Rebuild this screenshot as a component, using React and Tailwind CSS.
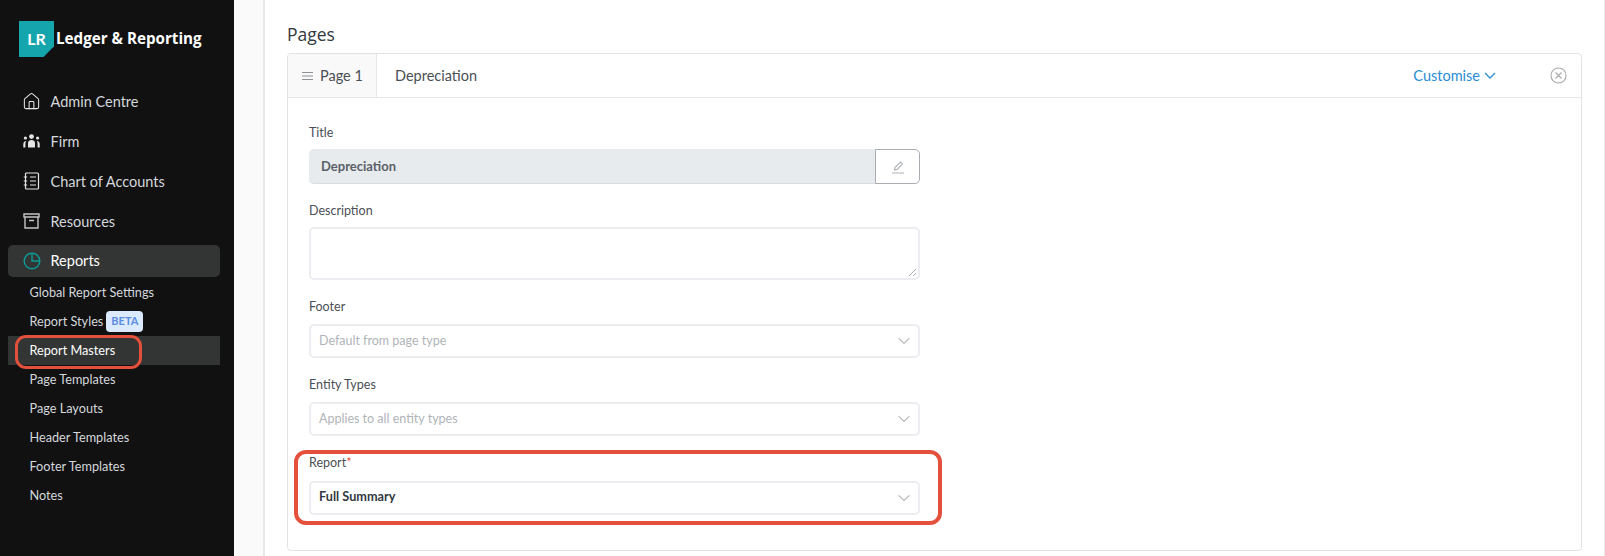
import React from "react";
import { ChevronDown, Home } from "lucide-react";

const Sub = ({ children, active }) => (
  <div className={`h-[29px] flex items-center pl-[21.5px] text-[12.7px] ${active ? "bg-[#333534] text-white" : "text-[#d5d8dc]"}`}>{children}</div>
);

const NavItem = ({ icon, label, active }) => (
  <div className={`h-[32px] mb-[8px] flex items-center gap-[9.5px] pl-[14px] rounded-[5px] text-[14.5px] ${active ? "bg-[#333534] text-white" : "text-[#d5d8dc]"}`}>
    <span className="w-[19px] flex justify-center">{icon}</span>
    <span className={active ? "" : "pt-[2px]"}>{label}</span>
  </div>
);

const Select = ({ text, strong }) => (
  <div className="h-[34px] w-[611px] border-2 border-[#ebedf0] rounded-[5px] bg-white flex items-center justify-between pl-[8px] pr-[4px]">
    <span className={strong ? "font-bold text-[12.7px] text-[#333a42] pb-[2px]" : "text-[12.5px] text-[#b0b4b9]"}>{text}</span>
    <ChevronDown size={20} strokeWidth={1} className="text-[#777]" />
  </div>
);

const Label = ({ children, mb = "mb-[9px]", shift = "" }) => <div className={`text-[12.5px] text-[#4a4f55] leading-[16px] ${mb} ${shift}`}>{children}</div>;

export default function App() {
  return (
    <div className="w-[1605px] h-[556px] overflow-hidden flex bg-[#fafafa] font-['Lato','Noto_Sans',sans-serif]">
      <aside className="w-[234px] shrink-0 bg-[#111112] pl-[8px] pr-[14px] flex flex-col">
        <div className="h-[85px] flex items-start pt-[21px] pl-[11px] gap-[2px]">
          <div className="w-[35px] h-[36px] shrink-0 bg-[#14a5ad] flex items-center justify-center text-white font-bold text-[16px] [clip-path:polygon(0_0,100%_0,100%_70%,70%_100%,0_100%)]">LR</div>
          <div className="text-white font-bold text-[15.2px] whitespace-nowrap font-['Open_Sans',sans-serif] leading-[36px] mt-[-1px]">Ledger &amp; Reporting</div>
        </div>
        <NavItem label="Admin Centre" icon={<Home size={19} strokeWidth={1.3} className="text-[#e5e5e5]" />} />
        <NavItem label="Firm" icon={
          <svg width="17" height="14" viewBox="0 0 17 14" fill="#e5e5e5"><circle cx="8.5" cy="2.6" r="2.4" /><circle cx="2.4" cy="4" r="1.6" /><circle cx="14.6" cy="4" r="1.6" /><path d="M5 13.5V9c0-2 1.5-3 3.5-3S12 7 12 9v4.5zM.3 13.5v-3.2c0-2 1-3.3 3-3.3-.6.8-.9 1.7-.9 3v3.5zM16.7 13.5v-3.2c0-2-1-3.3-3-3.3.6.8.9 1.7.9 3v3.5z" /></svg>
        } />
        <NavItem label="Chart of Accounts" icon={
          <svg width="17" height="18" viewBox="0 0 17 18" fill="none" stroke="#e5e5e5" strokeWidth="1.2"><rect x="2.5" y="1" width="13" height="16" rx="1" /><path d="M7 5h6M7 9h6M7 13h6M.8 5h3.4M.8 9h3.4M.8 13h3.4" /></svg>
        } />
        <NavItem label="Resources" icon={
          <svg width="17" height="16" viewBox="0 0 17 16" fill="none" stroke="#c4c4c4" strokeWidth="1.4"><path d="M1 1h15v3H1zM2 4v11h13V4M6 7.5h5" /></svg>
        } />
        <NavItem active label="Reports" icon={
          <svg width="18" height="18" viewBox="0 0 18 18" fill="none" stroke="#0d9c96" strokeWidth="1.4"><circle cx="9" cy="9" r="7.8" /><path d="M9 1.2V9h7.8" /></svg>
        } />
        <div className="-mt-[7px]">
          <Sub>Global Report Settings</Sub>
          <Sub>
            Report Styles
            <span className="ml-[3px] h-[21px] px-[5px] rounded-[4px] bg-[#dbeafe] text-[#5b8de0] text-[11px] font-bold flex items-center">BETA</span>
          </Sub>
          <Sub active>
            <span className="relative">
              Report Masters
              <span className="absolute left-[-15px] top-[-6px] w-[127px] h-[34px] border-[3.5px] border-[#e4503c] rounded-[11px]" />
            </span>
          </Sub>
          <Sub>Page Templates</Sub>
          <Sub>Page Layouts</Sub>
          <Sub>Header Templates</Sub>
          <Sub>Footer Templates</Sub>
          <Sub>Notes</Sub>
        </div>
      </aside>
      <main className="flex-1 min-w-0 pl-[29px]">
        <div className="h-full bg-white px-[22px] border-l-2 border-r border-[#e9e9ea]">
          <h2 className="text-[17.5px] font-medium text-[#33383e] font-['Open_Sans',sans-serif] leading-[22px] pt-[23px] mb-[8px]">Pages</h2>
          <div className="border border-[#e2e3e5] rounded-[4px] h-[498px]">
            <div className="h-[44px] flex items-center border-b border-[#e6e7e8] text-[14.5px] text-[#4a4f55]">
              <div className="w-[89px] h-full bg-[#f9f9f9] border-r border-[#e6e7e8] flex items-center pl-[14px] gap-[7px] rounded-tl-[4px]">
                <svg width="11" height="8" viewBox="0 0 11 8" stroke="#8d9196" strokeWidth="1"><path d="M0 .5h11M0 4h11M0 7.5h11" /></svg>
                Page 1
              </div>
              <div className="pl-[18px] flex-1">Depreciation</div>
              <div className="text-[#2b8ed4] flex items-center gap-[4px] mr-[54px]">
                Customise
                <svg width="12" height="7" viewBox="0 0 12 7" fill="none" stroke="#2b8ed4" strokeWidth="1.3"><path d="M1 1l5 5 5-5" /></svg>
              </div>
              <svg className="mr-[14px]" width="17" height="17" viewBox="0 0 17 17" fill="none" stroke="#a9a9a9" strokeWidth="1.1"><circle cx="8.5" cy="8.5" r="7.5" /><path d="M5.5 5.5l6 6M11.5 5.5l-6 6" /></svg>
            </div>
            <div className="pl-[21px] pt-[26px]">
              <Label shift="translate-y-[1px]">Title</Label>
              <div className="w-[611px] h-[35px] flex mb-[18px]">
                <div className="flex-1 bg-[#e8ebee] rounded-l-[5px] border-b border-[#d9dce0] flex items-center pl-[12px] pt-[2px] text-[13px] font-bold text-[#5a6068]">Depreciation</div>
                <div className="w-[45px] border border-[#a9adb2] rounded-r-[5px] flex items-center justify-center">
                  <svg width="14" height="14" viewBox="0 0 14 14" fill="none" stroke="#b0b3b6" strokeWidth="1.1"><path d="M3.5 10l.6-2.6L9.5 2l2 2-5.4 5.4zM1 13h12" /></svg>
                </div>
              </div>
              <Label shift="translate-y-[1px]">Description</Label>
              <div className="w-[611px] h-[53px] border-2 border-[#ebedf0] rounded-[5px] mb-[18px] relative">
                <svg className="absolute right-[1px] bottom-[1px]" width="9" height="9" viewBox="0 0 9 9" stroke="#999" strokeWidth="0.8"><path d="M1 8l7-7M5 8l3-3" /></svg>
              </div>
              <Label mb="mb-[10px]" shift="translate-y-[1px]">Footer</Label>
              <div className="mb-[19px]"><Select text="Default from page type" /></div>
              <Label>Entity Types</Label>
              <div className="mb-[19px]"><Select text="Applies to all entity types" /></div>
              <div className="relative">
                <span className="absolute left-[-15px] top-[-5px] w-[648px] h-[75px] border-[4px] border-[#e4503c] rounded-[12px]" />
                <Label mb="mb-[10px]">Report<span className="text-[#e4503c]">*</span></Label>
                <Select strong text="Full Summary" />
              </div>
            </div>
          </div>
        </div>
      </main>
    </div>
  );
}
